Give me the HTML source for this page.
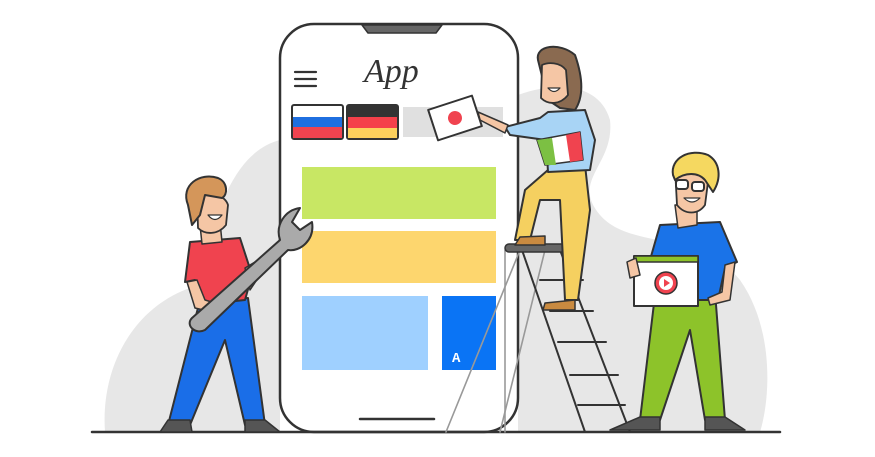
<!DOCTYPE html>
<html><head><style>html,body{margin:0;padding:0;background:#fff;width:875px;height:457px;overflow:hidden}</style></head>
<body>
<svg width="875" height="457" viewBox="0 0 875 457" xmlns="http://www.w3.org/2000/svg" stroke-linejoin="round" stroke-linecap="round">
<path d="M105 432 C100 360 140 300 200 285 C215 200 240 150 280 140 L280 432 Z" fill="#e7e7e7"/>
<path d="M518 95 C560 80 600 85 610 120 C615 165 570 180 600 215 C630 250 700 230 740 280 C775 330 770 400 760 432 L518 432 Z" fill="#e7e7e7"/>
<rect x="280" y="24" width="238" height="408" rx="34" fill="#fff" stroke="#333" stroke-width="2.5"/>
<path d="M362 25 L442 25 L436 33 L368 33 Z" fill="#666" stroke="#333" stroke-width="1.5"/>
<g stroke="#333" stroke-width="2.2"><line x1="295" y1="72" x2="316" y2="72"/><line x1="295" y1="79" x2="316" y2="79"/><line x1="295" y1="86" x2="316" y2="86"/></g>
<text x="364" y="82" font-family="URW Chancery L, Liberation Serif, cursive" font-style="italic" font-size="34" fill="#333">App</text>
<rect x="292" y="105" width="51" height="34" rx="2" fill="#fff" stroke="#333" stroke-width="2"/>
<rect x="293" y="117" width="49" height="10" fill="#1f6fe0"/><rect x="293" y="127" width="49" height="11" fill="#f0434f"/>
<rect x="347" y="105" width="51" height="34" rx="2" fill="#f5404a" stroke="#333" stroke-width="2"/>
<rect x="348" y="106" width="49" height="11" fill="#333"/><rect x="348" y="128" width="49" height="10" fill="#fdd05c"/>
<rect x="403" y="107" width="100" height="30" fill="#e0e0e0"/>
<rect x="302" y="167" width="194" height="52" fill="#c8e764"/>
<rect x="302" y="231" width="194" height="52" fill="#fdd66e"/>
<rect x="302" y="296" width="126" height="74" fill="#9fd0ff"/>
<rect x="442" y="296" width="54" height="74" fill="#0a74f5"/>
<text x="452" y="362" font-family="Liberation Mono, monospace" font-weight="bold" font-size="14" fill="#fff">A</text>
<line x1="360" y1="419" x2="434" y2="419" stroke="#333" stroke-width="2.5"/>
<line x1="92" y1="432" x2="780" y2="432" stroke="#333" stroke-width="2.5"/>
<g stroke="#999" stroke-width="1.6"><line x1="520" y1="250" x2="446" y2="432"/><line x1="545" y1="250" x2="500" y2="432"/><line x1="505" y1="250" x2="505" y2="432"/></g>
<g stroke="#333" stroke-width="2"><line x1="522" y1="250" x2="585" y2="432"/><line x1="560" y1="250" x2="630" y2="432"/>
<line x1="540" y1="280" x2="583" y2="280"/><line x1="550" y1="311" x2="593" y2="311"/><line x1="558" y1="342" x2="606" y2="342"/><line x1="570" y1="375" x2="618" y2="375"/><line x1="578" y1="405" x2="625" y2="405"/></g>
<rect x="505" y="244" width="72" height="8" rx="4" fill="#666" stroke="#333" stroke-width="1.5"/>
<path d="M548 170 L585 165 L590 210 L578 300 L565 300 L560 200 L540 200 L530 240 L515 240 L525 190 Z" fill="#f5d060" stroke="#333" stroke-width="2"/>
<path d="M545 303 L575 300 L575 310 L543 310 Z" fill="#c98a40" stroke="#333" stroke-width="1.5"/>
<path d="M520 237 L545 236 L545 245 L515 245 Z" fill="#c98a40" stroke="#333" stroke-width="1.5"/>
<path d="M548 112 L585 110 L595 140 L590 170 L548 172 L546 140 L510 135 L505 127 L540 118 Z" fill="#a8d4f5" stroke="#333" stroke-width="2"/>
<path d="M478 112 L508 125 L505 133 L480 120 Z" fill="#f5c6a5" stroke="#333" stroke-width="1.5"/>
<path d="M537 140 L580 132 L583 160 L545 165 Z" fill="#fff" stroke="#333" stroke-width="1.5"/>
<path d="M537 140 L552 138 L556 165 L545 165 Z" fill="#7cc043"/><path d="M566 135 L580 132 L583 160 L570 162 Z" fill="#f0434f"/>
<path d="M538 60 C535 45 560 42 575 55 C582 75 585 95 575 110 L560 108 L548 100 Z" fill="#8a6a50" stroke="#333" stroke-width="2"/>
<path d="M542 65 C548 62 560 62 566 70 L568 95 C560 105 548 105 541 98 Z" fill="#f5c6a5" stroke="#333" stroke-width="1.8"/>
<path d="M548 88 Q554 95 560 88 Z" fill="#fff" stroke="#333" stroke-width="1.2"/>
<g transform="rotate(-18 455 118)"><rect x="432" y="102" width="46" height="32" fill="#fff" stroke="#333" stroke-width="2"/><circle cx="455" cy="118" r="7" fill="#f0434f"/></g>
<path d="M655 295 L715 292 L725 420 L705 420 L690 330 L660 420 L640 420 Z" fill="#8dc32a" stroke="#333" stroke-width="2"/>
<path d="M640 417 L660 417 L660 430 L610 430 Z" fill="#555" stroke="#333" stroke-width="1.5"/>
<path d="M705 417 L725 417 L745 430 L705 430 Z" fill="#555" stroke="#333" stroke-width="1.5"/>
<path d="M660 225 L720 222 L737 262 L725 268 L718 300 L655 300 L650 260 Z" fill="#1a73e8" stroke="#333" stroke-width="2"/>
<path d="M725 265 L735 262 L730 300 L710 305 L708 298 L722 292 Z" fill="#f5c6a5" stroke="#333" stroke-width="1.5"/>
<path d="M675 205 L697 205 L697 225 L678 228 Z" fill="#f5c6a5" stroke="#333" stroke-width="1.5"/>
<path d="M675 168 C690 160 705 170 708 182 L705 205 C698 215 685 215 677 205 Z" fill="#f5c6a5" stroke="#333" stroke-width="1.8"/>
<path d="M673 175 C670 158 690 148 708 155 C720 162 722 178 713 192 L705 180 C698 172 685 172 675 180 Z" fill="#f5d860" stroke="#333" stroke-width="2"/>
<g fill="#fff" stroke="#333" stroke-width="2"><rect x="676" y="180" width="12" height="9" rx="3"/><rect x="692" y="182" width="12" height="9" rx="3"/></g>
<path d="M684 198 Q692 206 700 198 Z" fill="#fff" stroke="#333" stroke-width="1.2"/>
<rect x="634" y="256" width="64" height="50" fill="#fff" stroke="#333" stroke-width="2"/>
<rect x="634" y="256" width="64" height="6" fill="#8dc32a" stroke="#333" stroke-width="1.5"/>
<circle cx="666" cy="283" r="11" fill="#f0434f" stroke="#333" stroke-width="1.5"/>
<circle cx="666" cy="283" r="7" fill="#fff"/><path d="M664 279 L670 283 L664 287 Z" fill="#f0434f"/>
<path d="M627 262 L636 258 L640 275 L630 278 Z" fill="#f5c6a5" stroke="#333" stroke-width="1.5"/>
<path d="M200 300 L248 298 L265 425 L245 425 L225 340 L190 425 L168 425 Z" fill="#1a6ee8" stroke="#333" stroke-width="2"/>
<path d="M168 420 L190 420 L192 432 L160 432 Z" fill="#555" stroke="#333" stroke-width="1.5"/>
<path d="M245 420 L265 420 L280 432 L245 432 Z" fill="#555" stroke="#333" stroke-width="1.5"/>
<path d="M190 242 L240 238 L252 275 L245 300 L198 305 L195 280 L185 282 Z" fill="#f0434f" stroke="#333" stroke-width="2"/>
<path d="M187 282 L197 280 L205 300 L215 303 L212 312 L195 308 Z" fill="#f5c6a5" stroke="#333" stroke-width="1.5"/>
<path d="M245 268 L255 262 L262 272 L250 290 Z" fill="#f5c6a5" stroke="#333" stroke-width="1.5"/>
<path d="M192 318 L280 240 C275 225 285 210 300 208 L292 222 L300 230 L312 222 C315 240 300 252 288 250 L205 330 C195 335 185 325 192 318 Z" fill="#aaa" stroke="#333" stroke-width="2"/>
<path d="M200 225 L220 222 L222 242 L202 244 Z" fill="#f5c6a5" stroke="#333" stroke-width="1.5"/>
<path d="M197 195 C208 190 225 195 228 205 L226 225 C218 235 205 235 198 228 Z" fill="#f5c6a5" stroke="#333" stroke-width="1.8"/>
<path d="M188 205 C180 185 200 172 218 178 C228 182 228 195 222 198 L205 195 L200 215 L192 225 Z" fill="#d4965a" stroke="#333" stroke-width="2"/>
<path d="M208 215 Q215 224 222 215 Z" fill="#fff" stroke="#333" stroke-width="1.2"/>
</svg>
</body></html>
